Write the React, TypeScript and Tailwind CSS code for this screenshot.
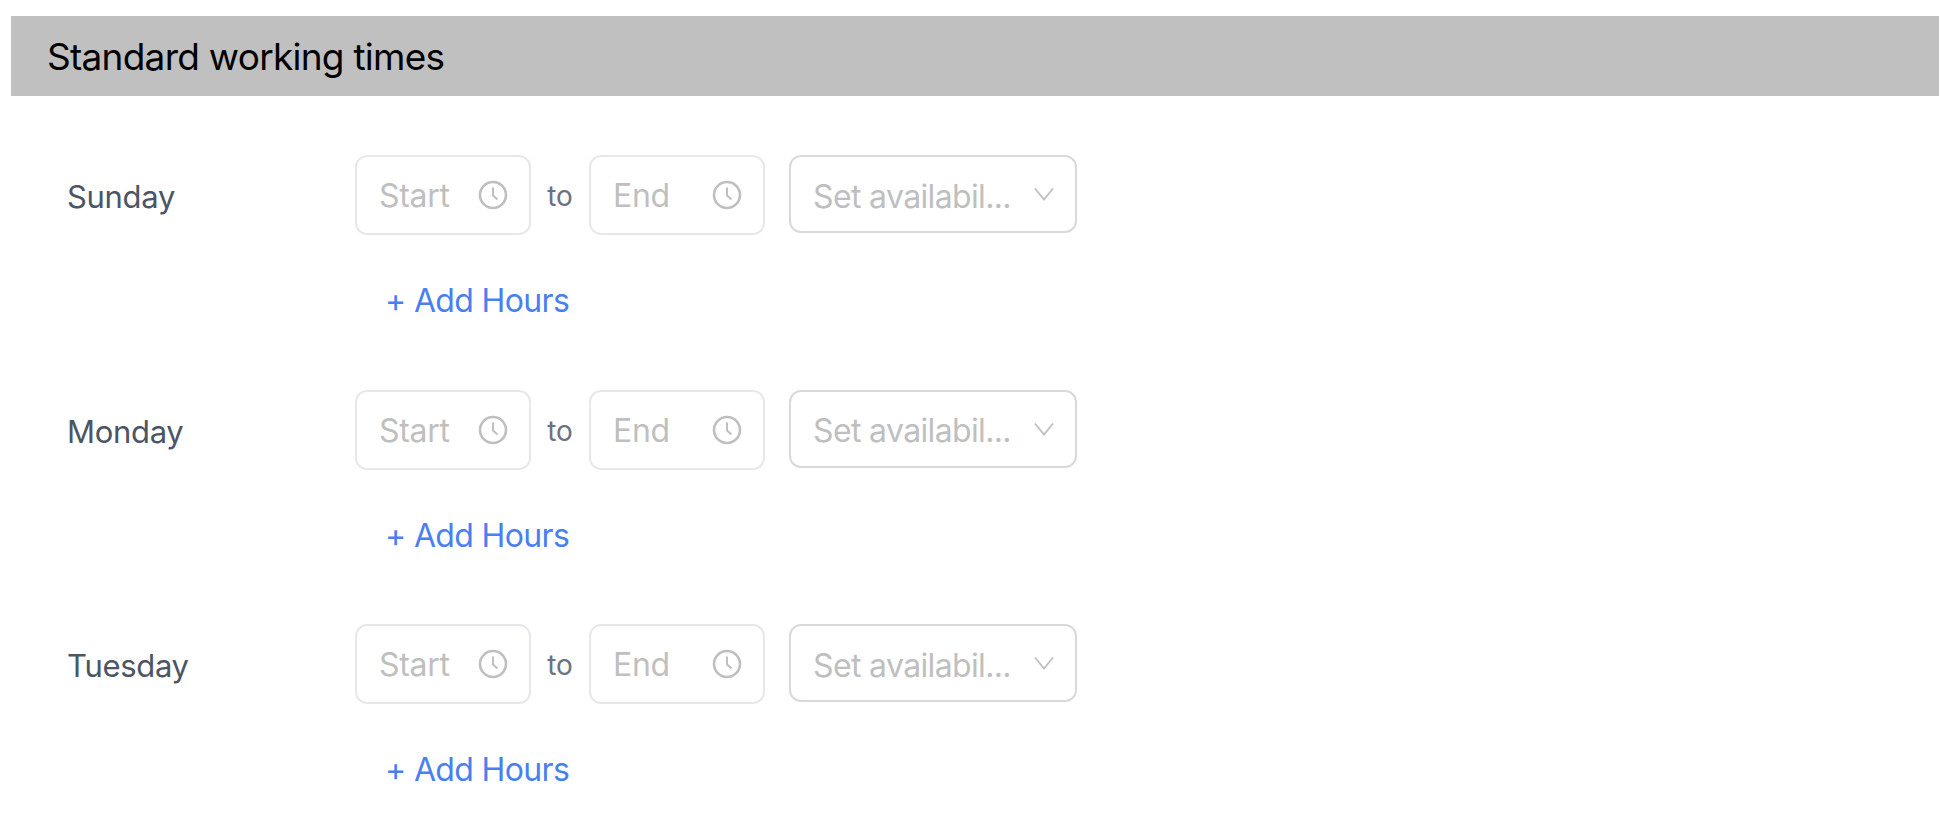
const days = ['Sunday', 'Monday', 'Tuesday'];

function ClockIcon() {
  return (
    <svg width="30" height="30" viewBox="0 0 30 30" fill="none" stroke="#bfbfbf" strokeWidth="2.6" className="shrink-0">
      <circle cx="15" cy="15" r="13" />
      <path d="M15 7.5v8l4.5 4" strokeWidth="2" />
    </svg>
  );
}

function ChevronIcon() {
  return (
    <svg width="20" height="14" viewBox="0 0 20 14" fill="none" stroke="#bfbfbf" strokeWidth="1.8" className="shrink-0">
      <path d="M1 1.5l9 11 9-11" />
    </svg>
  );
}

function TimeInput({ placeholder }: { placeholder: string }) {
  return (
    <div className="flex h-[80px] w-[176px] items-center justify-between rounded-[12px] border-2 border-[#e8e8ec] pl-[22px] pr-[21px]">
      <span className="pt-[2px] text-[32px] tracking-[-0.01em] text-[#bfbfbf]">{placeholder}</span>
      <ClockIcon />
    </div>
  );
}

function DayRow({ day }: { day: string }) {
  return (
    <div className="flex flex-col">
      <div className="flex items-start">
        <div className="w-[288px] pt-[19px] text-[31px] tracking-[-0.01em] text-[#4b5563]">{day}</div>
        <TimeInput placeholder="Start" />
        <span className="w-[58px] pt-[20px] text-center text-[28px] text-[#6b7280]">to</span>
        <TimeInput placeholder="End" />
        <div className="ml-[24px] flex h-[78px] w-[288px] items-center justify-between rounded-[12px] border-2 border-[#d9d9d9] pl-[22px] pr-[21px]">
          <span className="pt-[5px] text-[32px] tracking-[-0.02em] text-[#bfbfbf]">Set availabil...</span>
          <ChevronIcon />
        </div>
      </div>
      <div className="mt-[44px] pl-[318px] text-[32px] leading-[44px] tracking-[-0.02em] text-[#4a7ff0]">+ Add Hours</div>
    </div>
  );
}

export default function App() {
  return (
    <div className="min-h-[828px] bg-white pl-[11px] pt-[16px] pb-[10px] font-['Inter',sans-serif]">
      <div className="mr-[21px] flex h-[80px] items-center bg-[#c0c0c0] pl-[36px] pt-[2px] text-[37px] tracking-[-0.02em] text-black">
        Standard working times
      </div>
      <div className="mt-[59px] flex flex-col gap-[66.5px] pl-[56px]">
        {days.map((day) => (
          <DayRow key={day} day={day} />
        ))}
      </div>
    </div>
  );
}
